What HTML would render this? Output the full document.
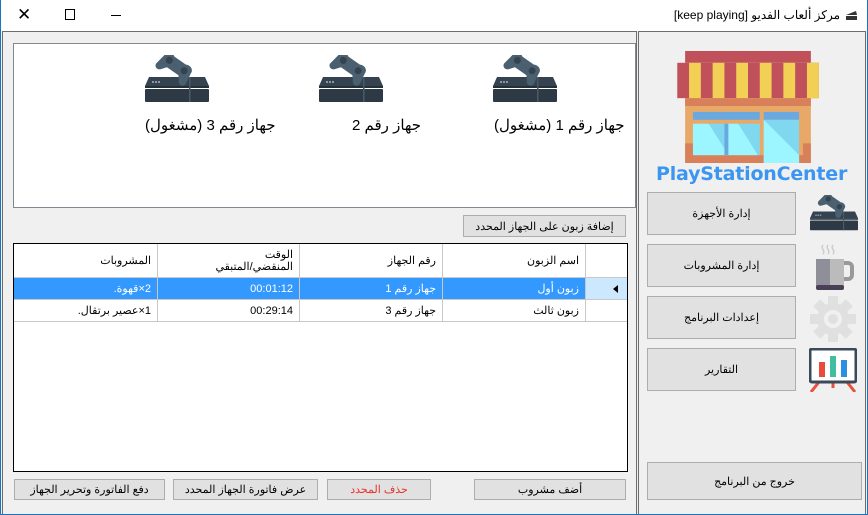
<!DOCTYPE html>
<html><head><meta charset="utf-8"><style>
*{margin:0;padding:0;box-sizing:border-box}
body{width:868px;height:515px;overflow:hidden;background:#f0f0f0;font-family:"Liberation Sans","Noto Sans CJK SC",sans-serif;font-size:12px;color:#000;position:relative}
.a{position:absolute}
.btn{position:absolute;background:#e1e1e1;border:1px solid #adadad;display:flex;align-items:center;justify-content:center;font-size:11px;direction:rtl}
.cell{position:absolute;border-right:1px solid #c8c8c8;border-bottom:1px solid #c8c8c8;direction:rtl;text-align:right;padding-right:6px;font-size:11px;display:flex;align-items:center}
</style></head><body>
<div class="a" style="left:0;top:0;width:868px;height:515px;border:1px solid #1e73be;border-top:none"></div>
<div class="a" style="left:1px;top:0;width:866px;height:31px;background:#fff"></div>
<div class="a" style="left:17px;top:5px;font-size:17px;font-family:'DejaVu Sans'">✕</div>
<div class="a" style="left:65px;top:9px;width:10px;height:11px;border:1px solid #000"></div>
<div class="a" style="left:111px;top:15px;width:10px;height:1px;background:#000"></div>
<div class="a" style="right:28px;top:8px;font-size:12px;direction:rtl">مركز ألعاب الفديو [keep playing]</div>
<svg class="a" style="left:844px;top:8px" width="14" height="14" viewBox="0 0 14 14"><path d="M2 7l10-4 1 4H3z" fill="#333"/><rect x="2" y="8" width="11" height="4" fill="#333"/></svg>

<div class="a" style="left:2px;top:31px;width:635px;height:483px;border:1px solid #6d6d6d;border-bottom:none"></div>
<div class="a" style="left:638px;top:31px;width:228px;height:483px;border:1px solid #6d6d6d;border-bottom:none"></div>

<div class="a" style="left:13px;top:43px;width:623px;height:165px;background:#fff;border:1px solid #828790"></div>

<svg width="0" height="0" style="position:absolute"><defs><g id="ps">
<path d="M4 22h56l4 9H0z" fill="#34434f"/>
<rect x="0" y="31" width="64" height="2" fill="#22303a"/>
<rect x="0" y="34" width="64" height="13" rx="1" fill="#2d3a45"/>
<rect x="44" y="22" width="1.5" height="25" fill="#4a5966"/>
<rect x="7" y="26" width="2" height="2" fill="#8a97a2"/><rect x="10" y="26" width="2" height="2" fill="#8a97a2"/><rect x="13" y="26" width="2" height="2" fill="#8a97a2"/>
<g transform="rotate(35 30 13)">
<path d="M14 8c0-5 6-6 9-4h14c3-2 9-1 9 4l2 12c0 4-5 5-7 2l-4-5H23l-4 5c-2 3-7 2-7-2z" fill="#4a6070"/>
<circle cx="21" cy="10" r="3.5" fill="#34434f"/><circle cx="39" cy="10" r="3.5" fill="#34434f"/>
</g>
</g></defs></svg>
<svg class="a" style="left:145px;top:55px" width="64" height="48"><use href="#ps"/></svg>
<svg class="a" style="left:319px;top:55px" width="64" height="48"><use href="#ps"/></svg>
<svg class="a" style="left:493px;top:55px" width="64" height="48"><use href="#ps"/></svg>
<div class="a" style="left:145px;top:116px;font-size:15px;direction:rtl">جهاز رقم 3 (مشغول)</div>
<div class="a" style="left:352px;top:116px;font-size:15px;direction:rtl">جهاز رقم 2</div>
<div class="a" style="left:494px;top:116px;font-size:15px;direction:rtl">جهاز رقم 1 (مشغول)</div>

<div class="btn" style="left:463px;top:215px;width:163px;height:22px">إضافة زبون على الجهاز المحدد</div>

<div class="a" style="left:13px;top:243px;width:615px;height:229px;background:#fff;border:1px solid #000"></div>
<div class="cell" style="left:14px;top:244px;width:144px;height:34px">المشروبات</div>
<div class="cell" style="left:158px;top:244px;width:142px;height:34px;line-height:12px">الوقت<br>المنقضي/المتبقي</div>
<div class="cell" style="left:300px;top:244px;width:143px;height:34px">رقم الجهاز</div>
<div class="cell" style="left:443px;top:244px;width:143px;height:34px">اسم الزبون</div>
<div class="cell" style="left:586px;top:244px;width:41px;height:34px;border-right:none"></div>
<div class="cell" style="left:14px;top:278px;width:144px;height:22px;background:#3399ff;color:#fff">2×قهوة.</div>
<div class="cell" style="left:158px;top:278px;width:142px;height:22px;background:#3399ff;color:#fff">00:01:12</div>
<div class="cell" style="left:300px;top:278px;width:143px;height:22px;background:#3399ff;color:#fff">جهاز رقم 1</div>
<div class="cell" style="left:443px;top:278px;width:143px;height:22px;background:#3399ff;color:#fff">زبون أول</div>
<div class="cell" style="left:586px;top:278px;width:41px;height:22px;background:#cce8ff;border-right:none"></div>
<div class="a" style="left:613px;top:285px;width:0;height:0;border-top:4px solid transparent;border-bottom:4px solid transparent;border-right:5px solid #000"></div>
<div class="cell" style="left:14px;top:300px;width:144px;height:22px">1×عصير برتقال.</div>
<div class="cell" style="left:158px;top:300px;width:142px;height:22px">00:29:14</div>
<div class="cell" style="left:300px;top:300px;width:143px;height:22px">جهاز رقم 3</div>
<div class="cell" style="left:443px;top:300px;width:143px;height:22px">زبون ثالث</div>
<div class="cell" style="left:586px;top:300px;width:41px;height:22px;border-right:none"></div>

<div class="btn" style="left:14px;top:479px;width:151px;height:21px">دفع الفاتورة وتحرير الجهاز</div>
<div class="btn" style="left:173px;top:479px;width:145px;height:21px">عرض فاتورة الجهاز المحدد</div>
<div class="btn" style="left:327px;top:479px;width:104px;height:21px;color:#e8302a">حذف المحدد</div>
<div class="btn" style="left:474px;top:479px;width:152px;height:21px">أضف مشروب</div>

<svg class="a" style="left:676px;top:51px" width="144" height="112" viewBox="0 0 144 114">
<rect x="8" y="0" width="128" height="12" fill="#c0505a"/>
<rect x="0" y="12" width="144" height="36" fill="#c0505a"/>
<g fill="#f2cf55"><rect x="12" y="12" width="12" height="36"/><rect x="36" y="12" width="12" height="36"/><rect x="60" y="12" width="12" height="36"/><rect x="84" y="12" width="12" height="36"/><rect x="108" y="12" width="12" height="36"/><rect x="132" y="12" width="12" height="36"/></g>
<rect x="8" y="48" width="128" height="66" fill="#e8a868"/>
<rect x="8" y="48" width="128" height="8" fill="#d8805a"/>
<rect x="8" y="94" width="8" height="20" fill="#d8805a"/><rect x="128" y="94" width="8" height="20" fill="#d8805a"/>
<rect x="16" y="106" width="112" height="8" fill="#d8805a"/>
<rect x="16" y="62" width="68" height="8" fill="#6aa8e0"/>
<rect x="16" y="74" width="68" height="32" fill="#80d8f0"/>
<path d="M16 74h16l20 32H16z" fill="#9cf6ff"/><path d="M50 74h12l20 32H50z" fill="#9cf6ff"/>
<rect x="48" y="74" width="4" height="32" fill="#6aa8e0"/>
<rect x="88" y="62" width="36" height="8" fill="#6aa8e0"/>
<rect x="88" y="70" width="36" height="44" fill="#80d8f0"/>
<path d="M88 70l36 36v8H88z" fill="#9cf6ff"/>
</svg>
<div class="a" style="left:656px;top:163px;font-size:19px;font-weight:bold;color:#3a96f0;font-family:'DejaVu Sans',sans-serif;letter-spacing:-0.2px">PlayStationCenter</div>

<div class="btn" style="left:647px;top:192px;width:149px;height:43px">إدارة الأجهزة</div>
<div class="btn" style="left:647px;top:244px;width:149px;height:43px">إدارة المشروبات</div>
<div class="btn" style="left:647px;top:296px;width:149px;height:43px">إعدادات البرنامج</div>
<div class="btn" style="left:647px;top:348px;width:149px;height:43px">التقارير</div>
<div class="btn" style="left:647px;top:462px;width:215px;height:38px">خروج من البرنامج</div>

<svg class="a" style="left:810px;top:195px" width="48" height="36" viewBox="0 0 64 48"><use href="#ps"/></svg>
<svg class="a" style="left:812px;top:243px" width="44" height="48" viewBox="0 0 44 48">
<path d="M11 2c-3 4 3 5 0 9M16 2c-3 4 3 5 0 9M21 2c-3 4 3 5 0 9" stroke="#ccc" fill="none" stroke-width="1.5"/>
<rect x="26" y="20" width="14" height="16" rx="4" fill="none" stroke="#999" stroke-width="4"/>
<path d="M4 16h28v26a4 4 0 0 1-4 4H8a4 4 0 0 1-4-4z" fill="#bbb"/>
<path d="M4 16h14v30H8a4 4 0 0 1-4-4z" fill="#8f8f99"/>
<rect x="4" y="42" width="28" height="5" rx="2" fill="#4a4055"/>
</svg>
<svg class="a" style="left:810px;top:296px" width="46" height="46" viewBox="0 0 46 46">
<g fill="#e0e0e0"><rect x="18" y="0" width="10" height="46"/><rect x="0" y="18" width="46" height="10"/><rect x="18" y="0" width="10" height="46" transform="rotate(45 23 23)"/><rect x="18" y="0" width="10" height="46" transform="rotate(-45 23 23)"/></g>
<circle cx="23" cy="23" r="16" fill="#e0e0e0"/><circle cx="23" cy="23" r="9" fill="#f0f0f0"/><circle cx="23" cy="23" r="5" fill="#e0e0e0"/>
</svg>
<svg class="a" style="left:809px;top:348px" width="48" height="44" viewBox="0 0 48 44">
<path d="M10 34L2 44M38 34l8 10M24 34v6" stroke="#e85040" stroke-width="3"/>
<rect x="1" y="1" width="46" height="33" rx="2" fill="#fff" stroke="#3a4a58" stroke-width="3"/>
<rect x="10" y="14" width="6" height="15" fill="#e84d3c"/><rect x="21" y="8" width="6" height="21" fill="#3fbf9f"/><rect x="32" y="12" width="6" height="17" fill="#2d8fe0"/>
</svg>
</body></html>
